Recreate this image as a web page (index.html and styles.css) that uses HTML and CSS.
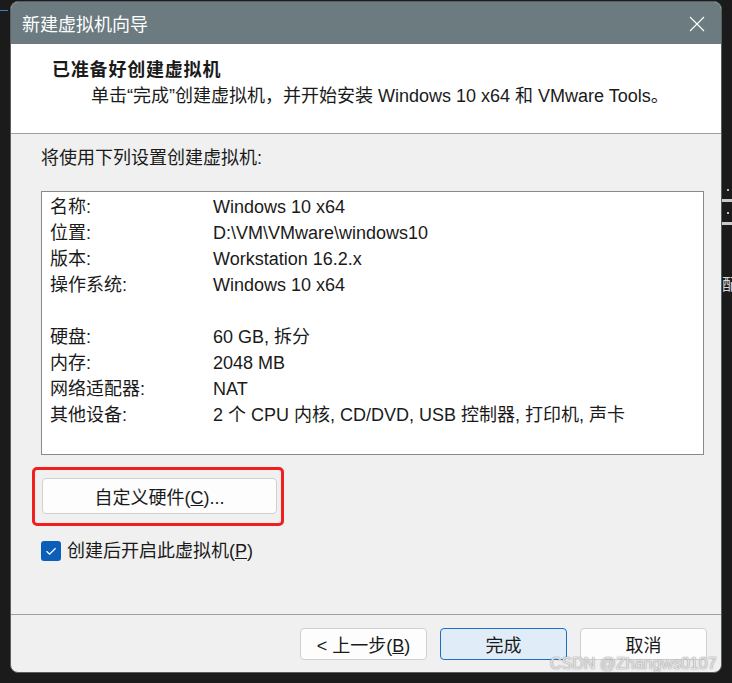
FILE: index.html
```html
<!DOCTYPE html>
<html lang="zh-CN">

<head>
    <meta charset="UTF-8">
    <title>新建虚拟机向导</title>
    <link rel="stylesheet" href="styles.css">
</head>

<body>
    <div class="screen">
        <div class="side-left">
            <div class="accent"></div>
        </div>

        <div class="window">
            <div class="titlebar">
                <span class="title">新建虚拟机向导</span>
                <svg class="close" width="16" height="16" viewBox="0 0 16 16">
                    <path d="M1 1 L15 15 M15 1 L1 15" stroke="#fff" stroke-width="1.2" fill="none" />
                </svg>
            </div>

            <div class="header">
                <div class="header-title">已准备好创建虚拟机</div>
                <div class="header-sub">单击“完成”创建虚拟机，并开始安装 Windows 10 x64 和 VMware Tools。</div>
            </div>

            <div class="content">
                <div class="intro">将使用下列设置创建虚拟机:</div>
                <div class="summary">
                    <div class="row"><span class="key">名称:</span><span>Windows 10 x64</span></div>
                    <div class="row"><span class="key">位置:</span><span>D:\VM\VMware\windows10</span></div>
                    <div class="row"><span class="key">版本:</span><span>Workstation 16.2.x</span></div>
                    <div class="row"><span class="key">操作系统:</span><span>Windows 10 x64</span></div>
                    <div class="row"><span class="key">&nbsp;</span><span></span></div>
                    <div class="row"><span class="key">硬盘:</span><span>60 GB, 拆分</span></div>
                    <div class="row"><span class="key">内存:</span><span>2048 MB</span></div>
                    <div class="row"><span class="key">网络适配器:</span><span>NAT</span></div>
                    <div class="row"><span class="key">其他设备:</span><span>2 个 CPU 内核, CD/DVD, USB 控制器, 打印机, 声卡</span></div>
                </div>

                <div class="highlight">
                    <button class="btn btn-wide">自定义硬件(<u>C</u>)...</button>
                </div>

                <label class="check">
                    <span class="check-box">
                        <svg width="20" height="20" viewBox="0 0 20 20">
                            <path d="M5.5 10.2 L8.6 13.2 L14.6 7.2" stroke="#fff" stroke-width="1.3" fill="none" />
                        </svg>
                    </span>
                    <span>创建后开启此虚拟机(<u>P</u>)</span>
                </label>
            </div>

            <div class="footer">
                <button class="btn">&lt; 上一步(<u>B</u>)</button>
                <button class="btn btn-primary">完成</button>
                <button class="btn">取消</button>
            </div>

            <div class="watermark">CSDN @Zhangws0107</div>
        </div>

        <div class="side-right">
            <div class="dot"></div>
            <div class="bar"></div>
            <div class="dot"></div>
            <div class="bar"></div>
            <div class="peek">配</div>
        </div>
    </div>
</body>

</html>
```

FILE: styles.css
```css
body {
    margin: 0;
    background-color: #1b1b1b;
    font-family: "Liberation Sans", "Noto Sans CJK SC", sans-serif;
    font-size: 18px;
    color: #1a1a1a;
}

.screen {
    display: flex;
    width: 732px;
    height: 683px;
    overflow: hidden;
    background-color: #1b1b1b;
}

.side-left {
    width: 10px;
    flex: none;
}

.side-left .accent {
    width: 8px;
    height: 1px;
    margin-top: 10px;
    background-color: #3f7fc0;
}

.side-right {
    width: 10px;
    flex: none;
    padding-top: 189px;
    overflow: hidden;
}

.side-right .dot {
    width: 2px;
    height: 2px;
    margin: 0 0 8px 5px;
    background-color: #bdbdbd;
}

.side-right .bar {
    height: 3px;
    margin-bottom: 10px;
    background-color: #c9c9c9;
}

.side-right .peek {
    margin-top: 46px;
    font-family: "Noto Sans CJK SC", sans-serif;
    font-size: 16px;
    color: #d8d8d8;
    white-space: nowrap;
}

.window {
    position: relative;
    width: 712px;
    height: 672px;
    margin-top: 1px;
    flex: none;
    display: flex;
    flex-direction: column;
    box-sizing: border-box;
    background-color: #f0f0f0;
    border: 1px solid #566064;
    border-radius: 8px;
    overflow: hidden;
}

.titlebar {
    height: 42px;
    flex: none;
    display: flex;
    align-items: center;
    justify-content: space-between;
    padding: 0 16px 0 11px;
    background-color: #6b7b7f;
}

.title {
    color: #fff;
    font-family: "Noto Sans CJK SC", sans-serif;
    font-size: 18px;
}

.close {
    margin-top: 1px;
}

.header {
    height: 77px;
    flex: none;
    padding: 12px 0 0 41px;
    background-color: #fff;
    border-bottom: 1px solid #a0a0a0;
}

.header-title {
    font-family: "Noto Sans CJK SC", sans-serif;
    font-weight: bold;
    letter-spacing: 0.8px;
    line-height: 24px;
}

.header-sub {
    margin: 4px 0 0 39px;
    line-height: 24px;
}

.content {
    display: flex;
    flex-direction: column;
    padding: 12px 17px 0 30px;
}

.intro {
    line-height: 24px;
}

.summary {
    height: 264px;
    box-sizing: border-box;
    margin-top: 21px;
    padding: 2px 8px;
    background-color: #fff;
    border: 1px solid #8a8a8a;
}

.row {
    display: grid;
    grid-template-columns: 163px auto;
    line-height: 26px;
    white-space: nowrap;
}

.highlight {
    align-self: flex-start;
    margin: 12px 0 0 -9px;
    padding: 8px 4px 9px 7px;
    border: 3px solid #f01e1e;
    border-radius: 5px;
}

.btn {
    width: 127px;
    height: 32px;
    padding: 0;
    font-family: "Liberation Sans", "Noto Sans CJK SC", sans-serif;
    font-size: 18px;
    color: #1a1a1a;
    background-color: #fdfdfd;
    border: 1px solid #d0d0d0;
    border-radius: 4px;
}

.btn-wide {
    display: block;
    width: 235px;
    height: 36px;
}

.btn-primary {
    background-color: #e0edf8;
    border-color: #1a6fc4;
}

.check {
    display: flex;
    align-items: center;
    gap: 6px;
    margin-top: 15px;
    line-height: 20px;
}

.check-box {
    width: 20px;
    height: 20px;
    border-radius: 3px;
    background-color: #0b5fb8;
}

.check-box svg {
    display: block;
}

.footer {
    margin-top: auto;
    display: flex;
    justify-content: flex-end;
    gap: 13px;
    padding: 13px 14px 12px 0;
    border-top: 1px solid #a0a0a0;
}

.watermark {
    position: absolute;
    left: 539px;
    top: 653px;
    font-size: 16px;
    line-height: 18px;
    color: #e2e2e2;
    text-shadow: 0 0 1.5px #6e6e6e;
    white-space: nowrap;
}
```
